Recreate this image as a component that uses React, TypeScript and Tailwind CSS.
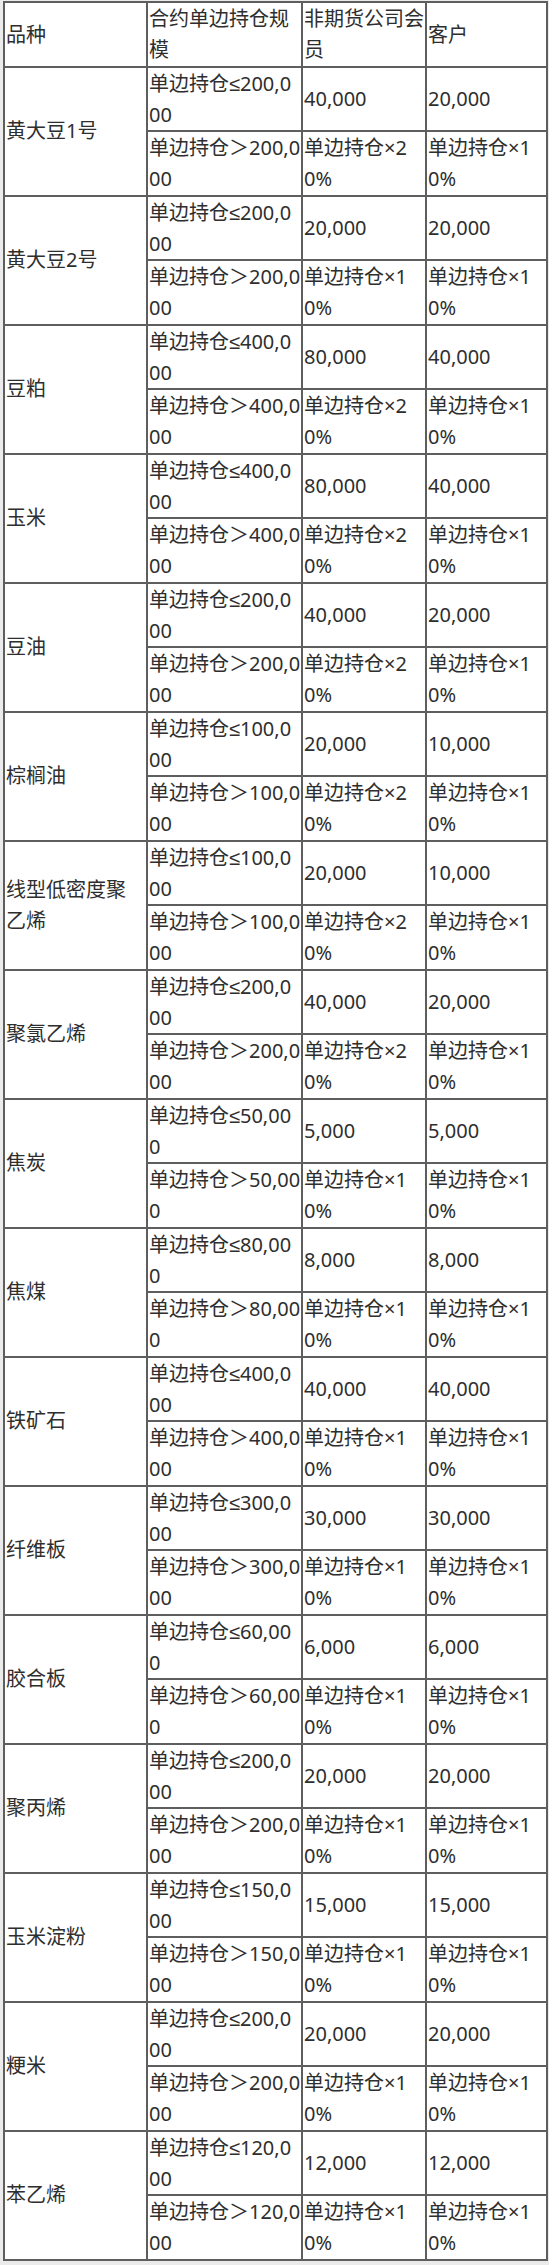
import React from "react";

type Item = {
  name: string;
  le: string;
  gt: string;
  m1: string;
  c1: string;
  m2: string;
  c2: string;
};

const data: Item[] = [
  { name: "黄大豆1号", le: "单边持仓≤200,0\n00", gt: "单边持仓＞200,0\n00", m1: "40,000", c1: "20,000", m2: "单边持仓×2\n0%", c2: "单边持仓×1\n0%" },
  { name: "黄大豆2号", le: "单边持仓≤200,0\n00", gt: "单边持仓＞200,0\n00", m1: "20,000", c1: "20,000", m2: "单边持仓×1\n0%", c2: "单边持仓×1\n0%" },
  { name: "豆粕", le: "单边持仓≤400,0\n00", gt: "单边持仓＞400,0\n00", m1: "80,000", c1: "40,000", m2: "单边持仓×2\n0%", c2: "单边持仓×1\n0%" },
  { name: "玉米", le: "单边持仓≤400,0\n00", gt: "单边持仓＞400,0\n00", m1: "80,000", c1: "40,000", m2: "单边持仓×2\n0%", c2: "单边持仓×1\n0%" },
  { name: "豆油", le: "单边持仓≤200,0\n00", gt: "单边持仓＞200,0\n00", m1: "40,000", c1: "20,000", m2: "单边持仓×2\n0%", c2: "单边持仓×1\n0%" },
  { name: "棕榈油", le: "单边持仓≤100,0\n00", gt: "单边持仓＞100,0\n00", m1: "20,000", c1: "10,000", m2: "单边持仓×2\n0%", c2: "单边持仓×1\n0%" },
  { name: "线型低密度聚\n乙烯", le: "单边持仓≤100,0\n00", gt: "单边持仓＞100,0\n00", m1: "20,000", c1: "10,000", m2: "单边持仓×2\n0%", c2: "单边持仓×1\n0%" },
  { name: "聚氯乙烯", le: "单边持仓≤200,0\n00", gt: "单边持仓＞200,0\n00", m1: "40,000", c1: "20,000", m2: "单边持仓×2\n0%", c2: "单边持仓×1\n0%" },
  { name: "焦炭", le: "单边持仓≤50,00\n0", gt: "单边持仓＞50,00\n0", m1: "5,000", c1: "5,000", m2: "单边持仓×1\n0%", c2: "单边持仓×1\n0%" },
  { name: "焦煤", le: "单边持仓≤80,00\n0", gt: "单边持仓＞80,00\n0", m1: "8,000", c1: "8,000", m2: "单边持仓×1\n0%", c2: "单边持仓×1\n0%" },
  { name: "铁矿石", le: "单边持仓≤400,0\n00", gt: "单边持仓＞400,0\n00", m1: "40,000", c1: "40,000", m2: "单边持仓×1\n0%", c2: "单边持仓×1\n0%" },
  { name: "纤维板", le: "单边持仓≤300,0\n00", gt: "单边持仓＞300,0\n00", m1: "30,000", c1: "30,000", m2: "单边持仓×1\n0%", c2: "单边持仓×1\n0%" },
  { name: "胶合板", le: "单边持仓≤60,00\n0", gt: "单边持仓＞60,00\n0", m1: "6,000", c1: "6,000", m2: "单边持仓×1\n0%", c2: "单边持仓×1\n0%" },
  { name: "聚丙烯", le: "单边持仓≤200,0\n00", gt: "单边持仓＞200,0\n00", m1: "20,000", c1: "20,000", m2: "单边持仓×1\n0%", c2: "单边持仓×1\n0%" },
  { name: "玉米淀粉", le: "单边持仓≤150,0\n00", gt: "单边持仓＞150,0\n00", m1: "15,000", c1: "15,000", m2: "单边持仓×1\n0%", c2: "单边持仓×1\n0%" },
  { name: "粳米", le: "单边持仓≤200,0\n00", gt: "单边持仓＞200,0\n00", m1: "20,000", c1: "20,000", m2: "单边持仓×1\n0%", c2: "单边持仓×1\n0%" },
  { name: "苯乙烯", le: "单边持仓≤120,0\n00", gt: "单边持仓＞120,0\n00", m1: "12,000", c1: "12,000", m2: "单边持仓×1\n0%", c2: "单边持仓×1\n0%" },
];

const cell =
  "border-2 border-[#5e5e5e] p-0 pl-[1px] align-middle whitespace-pre overflow-hidden text-left font-normal";

export default function App() {
  return (
    <div className="w-[552px] bg-white">
      <div className="w-[549px] bg-[#ebebeb] pl-[3px] pr-[3px] pt-[1px] pb-[4px]">
        <table className="w-[543px] table-fixed border-collapse bg-white text-[20px] leading-[31.25px] text-[#2e2e2e] font-['Noto_Sans','Liberation_Sans','Noto_Sans_CJK_SC',sans-serif]">
          <colgroup>
            <col className="w-[143px]" />
            <col className="w-[155px]" />
            <col className="w-[124px]" />
            <col className="w-[121px]" />
          </colgroup>
          <tbody>
            <tr>
              <td className={cell}>品种</td>
              <td className={cell}>{"合约单边持仓规\n模"}</td>
              <td className={cell}>{"非期货公司会\n员"}</td>
              <td className={cell}>客户</td>
            </tr>
            {data.map((d) => (
              <React.Fragment key={d.name}>
                <tr>
                  <td className={cell} rowSpan={2}>
                    {d.name}
                  </td>
                  <td className={cell}>{d.le}</td>
                  <td className={cell}>{d.m1}</td>
                  <td className={cell}>{d.c1}</td>
                </tr>
                <tr>
                  <td className={cell}>{d.gt}</td>
                  <td className={cell}>{d.m2}</td>
                  <td className={cell}>{d.c2}</td>
                </tr>
              </React.Fragment>
            ))}
          </tbody>
        </table>
      </div>
    </div>
  );
}
